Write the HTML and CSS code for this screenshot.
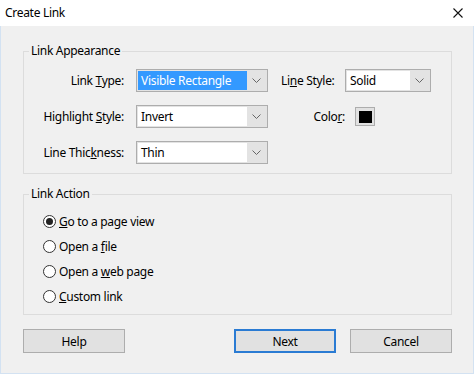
FILE: index.html
```html
<!DOCTYPE html>
<html>
<head>
<meta charset="utf-8">
<link rel="stylesheet" href="styles.css">
</head>
<body>
<div class="window">
  <div class="titlebar">
    <span class="title">Create Link</span>
    <svg class="close" width="10" height="10" viewBox="0 0 10 10"><path d="M0.5 0.5 L9.5 9.5 M9.5 0.5 L0.5 9.5" stroke="#111" stroke-width="1.1" fill="none"/></svg>
  </div>
  <div class="content">
    <fieldset class="group appearance">
      <legend>Link Appearance</legend>
      <div class="grid">
        <label class="lbl">Link <u>T</u>ype:</label>
        <div class="combo wide"><span class="field selected">Visible Rectangle</span><span class="drop"><svg width="9" height="5" viewBox="0 0 9 5"><path d="M0.5 0.5 L4.5 4.5 L8.5 0.5" stroke="#666" fill="none"/></svg></span></div>
        <label class="lbl2">Li<u>n</u>e Style:</label>
        <div class="combo narrow"><span class="field">Solid</span><span class="drop"><svg width="9" height="5" viewBox="0 0 9 5"><path d="M0.5 0.5 L4.5 4.5 L8.5 0.5" stroke="#666" fill="none"/></svg></span></div>

        <label class="lbl">Highlight <u>S</u>tyle:</label>
        <div class="combo wide"><span class="field">Invert</span><span class="drop"><svg width="9" height="5" viewBox="0 0 9 5"><path d="M0.5 0.5 L4.5 4.5 L8.5 0.5" stroke="#666" fill="none"/></svg></span></div>
        <label class="lbl2 end">Colo<u>r</u>:</label>
        <div class="swatch"><span class="chip"></span></div>

        <label class="lbl">Line Thic<u>k</u>ness:</label>
        <div class="combo wide"><span class="field">Thin</span><span class="drop"><svg width="9" height="5" viewBox="0 0 9 5"><path d="M0.5 0.5 L4.5 4.5 L8.5 0.5" stroke="#666" fill="none"/></svg></span></div>
      </div>
    </fieldset>

    <fieldset class="group action">
      <legend>Link Action</legend>
      <div class="radios">
        <div class="radio"><span class="dot checked"></span><span><u>G</u>o to a page view</span></div>
        <div class="radio"><span class="dot"></span><span>Open a <u>f</u>ile</span></div>
        <div class="radio"><span class="dot"></span><span>Open a <u>w</u>eb page</span></div>
        <div class="radio"><span class="dot"></span><span><u>C</u>ustom link</span></div>
      </div>
    </fieldset>

    <div class="buttons">
      <button class="btn">Help</button>
      <div class="right">
        <button class="btn default">Next</button>
        <button class="btn">Cancel</button>
      </div>
    </div>
  </div>
</div>
</body>
</html>
```

FILE: styles.css
```css
* { box-sizing: border-box; }
html, body { margin: 0; padding: 0; }
body {
  font-family: "Noto Sans", "Open Sans", sans-serif;
  font-size: 12px;
  letter-spacing: -0.3px;
  color: #000;
  background: #fff;
}
.window {
  width: 474px;
  height: 374px;
  display: flex;
  flex-direction: column;
}
.titlebar {
  height: 26px;
  background: #fff;
  display: flex;
  align-items: center;
  justify-content: space-between;
  padding: 0 11px 0 5px;
}
.title { line-height: 16px; }
.content {
  flex: 1;
  background: #f0f0f0;
  border: 1px solid #d3e2f2;
  border-top: none;
  padding: 17px 21px 0 22px;
}
.group {
  margin: 0;
  border: 1px solid #dcdcdc;
  min-width: 0;
}
.group legend {
  margin-left: 5px;
  padding: 0 2px;
  line-height: 16px;
}
.appearance { padding: 10px 0 9px 0; }
.grid {
  display: grid;
  grid-template-columns: 112px 145px 64px 86px;
  grid-auto-rows: 23px;
  row-gap: 13px;
  align-items: center;
}
.lbl { text-align: right; padding-right: 12px; }
.lbl2 { justify-self: start; }
.lbl2.end { justify-self: end; }
.combo {
  display: flex;
  height: 23px;
  border: 1px solid #adadad;
  background: #e3e3e3;
  padding: 1px;
}
.combo.wide { width: 132px; }
.combo.narrow { width: 86px; }
.field {
  flex: 1;
  background: #fff;
  padding-left: 3px;
  line-height: 19px;
  white-space: nowrap;
  overflow: hidden;
}
.field.selected { background: #3399ff; color: #fff; }
.drop {
  width: 19px;
  display: flex;
  align-items: center;
  justify-content: center;
}
.swatch {
  margin-left: 10px;
  width: 20px;
  height: 19px;
  border: 1px solid #adadad;
  background: #e1e1e1;
  display: flex;
  align-items: center;
  justify-content: center;
}
.chip { width: 13px; height: 12px; background: #000; }
.action {
  margin-top: 12px;
  padding: 7px 0 5px 0;
}
.radios { padding-left: 19px; }
.radio {
  height: 25px;
  display: flex;
  align-items: center;
  gap: 3px;
}
.dot {
  width: 13px;
  height: 13px;
  border-radius: 50%;
  border: 1px solid #333;
  background: #fff;
  display: flex;
  align-items: center;
  justify-content: center;
}
.dot.checked::after {
  content: "";
  width: 7px;
  height: 7px;
  border-radius: 50%;
  background: #222;
}
.buttons {
  margin-top: 14px;
  display: flex;
  justify-content: space-between;
}
.right { display: flex; gap: 14px; }
.btn {
  width: 102px;
  height: 24px;
  font: inherit;
  letter-spacing: inherit;
  color: #000;
  background: #e1e1e1;
  border: 1px solid #adadad;
  padding: 0;
}
.btn.default {
  border: 2px solid #2a7bd3;
}
```
